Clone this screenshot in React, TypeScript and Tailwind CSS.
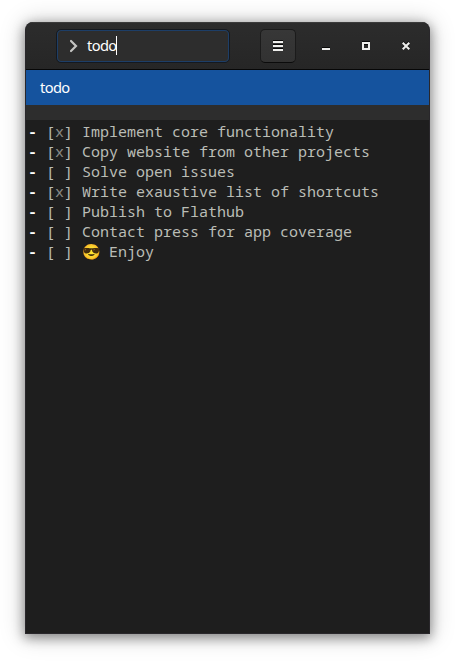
const items = [
  { done: true, text: 'Implement core functionality' },
  { done: true, text: 'Copy website from other projects' },
  { done: false, text: 'Solve open issues' },
  { done: true, text: 'Write exaustive list of shortcuts' },
  { done: false, text: 'Publish to Flathub' },
  { done: false, text: 'Contact press for app coverage' },
  { done: false, text: 'Enjoy', emoji: '😎' },
];

export default function App() {
  return (
    <div className="h-[662px] w-[455px] overflow-hidden bg-white pl-[25px] pt-[22px] font-['Noto_Sans',sans-serif]">
      <div className="flex h-[612px] w-[405px] flex-col overflow-hidden rounded-t-[8px] border-x border-b border-[#29272b] bg-[#1e1e1e] shadow-[0_3px_12px_1px_rgba(0,0,0,0.4),0_1px_24px_2px_rgba(0,0,0,0.18)]">
        <header className="flex h-12 shrink-0 items-center border-b border-t border-b-[#070707] border-t-[#3b3b3b] bg-linear-to-b from-[#2c2c2c] to-[#262626] pl-[30px]">
          <div className="flex h-[34px] w-[174px] items-center rounded-[5px] border border-[#15191f] bg-[#2d2d2d]">
            <div className="flex h-8 w-[172px] items-center rounded-[4px] border border-[#1d3e67] pl-[11px] text-[14.67px] text-white">
              <svg className="mr-[8px] h-[14px] w-[10px]" viewBox="0 0 10 14">
                <path d="M2 2l5 5-5 5" fill="none" stroke="#c4c4c2" strokeWidth="2.200" strokeLinecap="round" />
              </svg>
              <span className="pb-[2px] tracking-[-0.6px]">todo</span>
              <span className="-ml-[0.500px] mb-px h-[19px] w-px bg-white" />
            </div>
          </div>
          <button className="ml-[30px] flex h-[34px] w-9 items-center justify-center rounded-[5px] border border-[#1b1b1b] border-b-[#0b0b0b] bg-linear-to-b from-[#373737] to-[#323232]">
            <svg className="h-3 w-[10px]" viewBox="0 0 10 12">
              <path d="M0 0h10v1H0zM0 4h10v1H0zM0 8h10v1H0z" fill="#090909" />
              <path d="M0 1h10v2H0zM0 5h10v2H0zM0 9h10v2H0z" fill="#eeeeec" />
            </svg>
          </button>
          <div className="ml-[26px] flex gap-8">
            <svg className="h-[10px] w-2" viewBox="0 0 8 10">
              <path d="M0 6h8v1H0z" fill="#090909" />
              <path d="M0 7h8v2H0z" fill="#eeeeec" />
            </svg>
            <svg className="h-[10px] w-2" viewBox="0 0 8 10">
              <path d="M0 0h8v1H0zM2 3h4v1H2z" fill="#090909" />
              <path d="M1 2h6v6H1z" fill="none" stroke="#eeeeec" strokeWidth="2" />
            </svg>
            <svg className="h-[10px] w-2" viewBox="0 0 8 10">
              <path d="M1 1l6 6M7 1l-6 6" stroke="#090909" strokeWidth="2" />
              <path d="M.7 1.700l6.600 6.600M7.300 1.700L.7 8.300" stroke="#eeeeec" strokeWidth="2.100" />
            </svg>
          </div>
        </header>
        <div className="flex h-[35px] shrink-0 items-center bg-[#15539e] pb-px pl-[14px] text-[14.67px] tracking-[-0.6px] text-white">todo</div>
        <div className="h-[15px] shrink-0 bg-[#2d2d2d]" />
        <main className="pl-[2px] pt-px font-['Noto_Sans_Mono','DejaVu_Sans_Mono',monospace] text-[15px] text-[#babdb6]">
          {items.map((item) => (
            <div key={item.text} className="h-5 whitespace-pre leading-5">
              <span className="font-bold text-white">-</span>
              {' ['}
              <span className="text-[#888a85]">{item.done ? 'x' : ' '}</span>
              {'] '}
              {item.emoji && (
                <>
                  <span className="inline-block h-5 w-[18px] align-top font-['Noto_Color_Emoji'] leading-[22px]">{item.emoji}</span>
                  {' '}
                </>
              )}
              {item.text}
            </div>
          ))}
        </main>
      </div>
    </div>
  );
}
